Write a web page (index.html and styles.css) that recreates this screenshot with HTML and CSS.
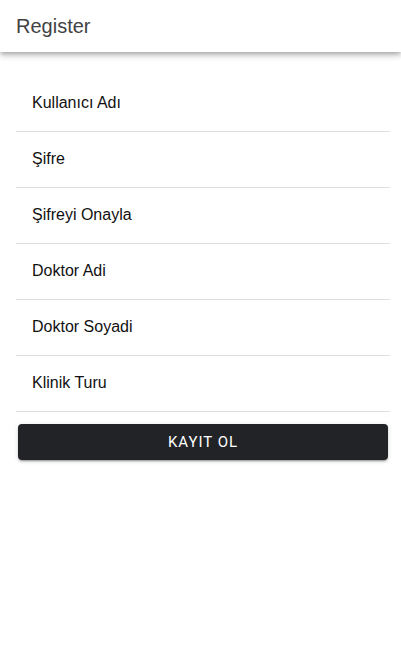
FILE: index.html
```html
<!DOCTYPE html>
<html>
<head>
<meta charset="utf-8">
<link rel="stylesheet" href="styles.css">
</head>
<body>
<header class="toolbar"><span class="title">Register</span></header>
<main class="content">
  <ul class="list">
    <li class="item">Kullanıcı Adı</li>
    <li class="item">Şifre</li>
    <li class="item">Şifreyi Onayla</li>
    <li class="item">Doktor Adi</li>
    <li class="item">Doktor Soyadi</li>
    <li class="item">Klinik Turu</li>
  </ul>
  <button class="btn">KAYIT OL</button>
</main>
</body>
</html>
```
FILE: styles.css
```css
html, body { margin: 0; padding: 0; background: #fff; }
body { font-family: "Liberation Sans", Arial, sans-serif; width: 401px; height: 658px; overflow: hidden; }
.toolbar {
  height: 52px;
  display: flex;
  align-items: center;
  padding-left: 16px;
  box-shadow: 0 2px 4px -1px rgba(0,0,0,0.2), 0 4px 5px 0 rgba(0,0,0,0.14), 0 1px 10px 0 rgba(0,0,0,0.12);
  position: relative;
  background: #fff;
}
.title { font-size: 20px; color: #424242; }
.content { padding: 24px 11px 0 16px; }
.list { list-style: none; margin: 0; padding: 0; }
.item {
  height: 53px;
  padding-bottom: 2px;
  border-bottom: 1px solid #dedede;
  display: flex;
  align-items: center;
  padding-left: 16px;
  font-size: 16px;
  color: #111;
}
.btn {
  display: block;
  margin: 12px 2px 0 2px;
  width: 370px;
  height: 36px;
  border: none;
  border-radius: 4px;
  background: #222327;
  color: #fff;
  font-family: Roboto, sans-serif;
  font-size: 15px;
  font-weight: 400;
  letter-spacing: 1px;
  box-shadow: 0 3px 1px -2px rgba(0,0,0,0.2), 0 2px 2px 0 rgba(0,0,0,0.14), 0 1px 5px 0 rgba(0,0,0,0.12);
  padding: 0;
}
```
